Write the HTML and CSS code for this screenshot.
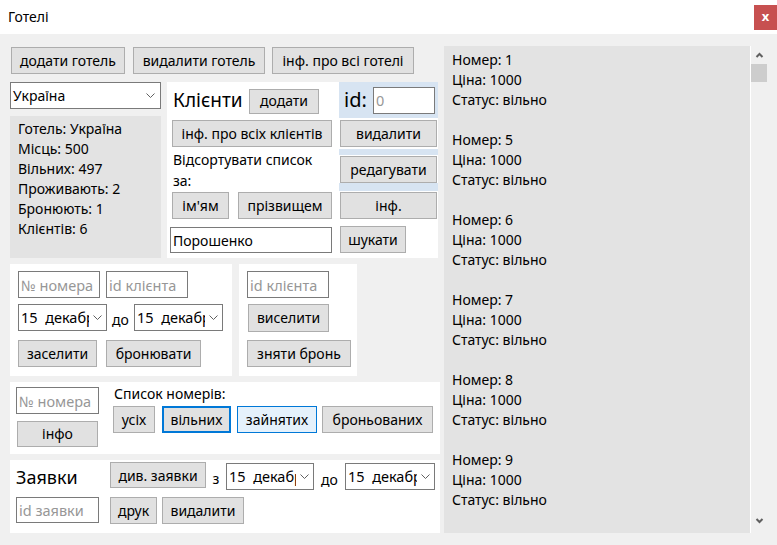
FILE: index.html
```html
<!DOCTYPE html>
<html lang="uk">
<head>
<meta charset="utf-8">
<title>Готелі</title>
<link rel="stylesheet" href="styles.css">
</head>
<body>
<div class="window">
  <header class="titlebar">
    <span class="title">Готелі</span>
    <span class="close">x</span>
  </header>
  <div class="main">
    <div class="left">
      <div class="toolbar">
        <button class="btn b-add-hotel">додати готель</button>
        <button class="btn b-del-hotel">видалити готель</button>
        <button class="btn b-info-hotels">інф. про всі готелі</button>
      </div>

      <div class="row2">
        <div class="hotelcol">
          <div class="combo combo-hotel"><span class="combo-text">Україна</span><span class="chev"><svg width="9" height="5" viewBox="0 0 9 5"><path d="M0.5 0.5 L4.5 4.5 L8.5 0.5" fill="none" stroke="#606060" stroke-width="1"/></svg></span></div>
          <div class="infobox">
            <div>Готель: Україна</div>
            <div>Місць: 500</div>
            <div>Вільних: 497</div>
            <div>Проживають: 2</div>
            <div>Бронюють: 1</div>
            <div>Клієнтів: 6</div>
          </div>
        </div>

        <div class="clients">
          <div class="clients-left">
            <div class="clients-head">
              <span class="heading">Клієнти</span>
              <button class="btn b-add-client">додати</button>
            </div>
            <button class="btn b-all-clients">інф. про всіх клієнтів</button>
            <div class="sortlabel">Відсортувати список<br>за:</div>
            <div class="sortbtns">
              <button class="btn b-name">ім'ям</button>
              <button class="btn b-surname">прізвищем</button>
            </div>
            <input class="field f-search" type="text" value="Порошенко">
          </div>
          <div class="clients-right">
            <div class="idbox">
              <span class="idlabel">id:</span>
              <input class="field f-id" type="text" placeholder="0">
            </div>
            <button class="btn b-col b-first">видалити</button>
            <div class="strip strip1"></div>
            <button class="btn b-col">редагувати</button>
            <div class="strip strip2"></div>
            <button class="btn b-col">інф.</button>
            <button class="btn b-find">шукати</button>
          </div>
        </div>
      </div>

      <div class="row3">
        <div class="panel settle">
          <div class="line">
            <input class="field f-small" type="text" placeholder="№ номера">
            <input class="field f-small" type="text" placeholder="id клієнта">
          </div>
          <div class="line line-dates">
            <div class="combo combo-date"><span class="combo-text">15&nbsp; декабря</span><span class="chev"><svg width="9" height="5" viewBox="0 0 9 5"><path d="M0.5 0.5 L4.5 4.5 L8.5 0.5" fill="none" stroke="#606060" stroke-width="1"/></svg></span></div>
            <span class="lbl-to">до</span>
            <div class="combo combo-date"><span class="combo-text">15&nbsp; декабря</span><span class="chev"><svg width="9" height="5" viewBox="0 0 9 5"><path d="M0.5 0.5 L4.5 4.5 L8.5 0.5" fill="none" stroke="#606060" stroke-width="1"/></svg></span></div>
          </div>
          <div class="line line-btns">
            <button class="btn b-settle">заселити</button>
            <button class="btn b-book">бронювати</button>
          </div>
        </div>
        <div class="panel evict">
          <input class="field f-small" type="text" placeholder="id клієнта">
          <button class="btn b-evict">виселити</button>
          <button class="btn b-unbook">зняти бронь</button>
        </div>
      </div>

      <div class="panel row4">
        <div class="room-col">
          <input class="field f-room" type="text" placeholder="№ номера">
          <button class="btn b-roominfo">інфо</button>
        </div>
        <div class="list-col">
          <div class="list-label">Список номерів:</div>
          <div class="list-btns">
            <button class="btn b-all">усіх</button>
            <button class="btn b-free focused">вільних</button>
            <button class="btn b-busy hovered">зайнятих</button>
            <button class="btn b-booked">броньованих</button>
          </div>
        </div>
      </div>

      <div class="panel row5">
        <span class="heading heading-req">Заявки</span>
        <div class="req-top">
          <button class="btn b-view">див. заявки</button>
          <span class="lbl-from">з</span>
          <div class="combo combo-req1"><span class="combo-text">15&nbsp; декабря</span><span class="chev"><svg width="9" height="5" viewBox="0 0 9 5"><path d="M0.5 0.5 L4.5 4.5 L8.5 0.5" fill="none" stroke="#606060" stroke-width="1"/></svg></span></div>
          <span class="lbl-to2">до</span>
          <div class="combo combo-req2"><span class="combo-text">15&nbsp; декабря</span><span class="chev"><svg width="9" height="5" viewBox="0 0 9 5"><path d="M0.5 0.5 L4.5 4.5 L8.5 0.5" fill="none" stroke="#606060" stroke-width="1"/></svg></span></div>
        </div>
        <input class="field f-req" type="text" placeholder="id заявки">
        <div class="req-bottom">
          <button class="btn b-print">друк</button>
          <button class="btn b-reqdel">видалити</button>
        </div>
      </div>
    </div>

    <div class="rooms">
      <div class="rooms-text">
        <div class="room"><div>Номер: 1</div><div>Ціна: 1000</div><div>Статус: вільно</div></div>
        <div class="room"><div>Номер: 5</div><div>Ціна: 1000</div><div>Статус: вільно</div></div>
        <div class="room"><div>Номер: 6</div><div>Ціна: 1000</div><div>Статус: вільно</div></div>
        <div class="room"><div>Номер: 7</div><div>Ціна: 1000</div><div>Статус: вільно</div></div>
        <div class="room"><div>Номер: 8</div><div>Ціна: 1000</div><div>Статус: вільно</div></div>
        <div class="room"><div>Номер: 9</div><div>Ціна: 1000</div><div>Статус: вільно</div></div>
      </div>
      <div class="scrollbar">
        <svg class="arrow" width="9" height="6" viewBox="0 0 9 6"><path d="M1.5 5 L4.5 2 L7.5 5" fill="none" stroke="#606060" stroke-width="2"/></svg>
        <div class="thumb"></div>
        <div class="spacer"></div>
        <svg class="arrow" width="9" height="6" viewBox="0 0 9 6"><path d="M1.5 1 L4.5 4 L7.5 1" fill="none" stroke="#606060" stroke-width="2"/></svg>
      </div>
    </div>
  </div>
</div>
</body>
</html>
```

FILE: styles.css
```css
* { box-sizing: border-box; }

html, body {
  margin: 0;
  padding: 0;
  background: #f0f0f0;
}

body {
  font-family: "Noto Sans", "Open Sans", sans-serif;
  font-size: 14px;
  color: #000;
  width: 777px;
  height: 545px;
  overflow: hidden;
}

.window {
  width: 777px;
  height: 545px;
  background: #f0f0f0;
}

.titlebar {
  height: 34px;
  background: #fff;
  display: flex;
  align-items: flex-start;
  justify-content: space-between;
}

.title {
  margin: 7px 0 0 8px;
  font-size: 14px;
  line-height: 20px;
}

.close {
  margin-top: 5px;
  width: 23px;
  height: 25px;
  background: #c75050;
  color: #fff;
  font-size: 13px;
  font-weight: bold;
  line-height: 23px;
  text-align: center;
}

.main {
  display: flex;
  padding-left: 10px;
}

.left {
  width: 430px;
  padding-top: 13px;
  display: flex;
  flex-direction: column;
}

/* generic controls */
.btn {
  font-family: inherit;
  font-size: 14px;
  color: #000;
  background: #e1e1e1;
  border: 1px solid #adadad;
  border-radius: 0;
  padding: 0;
  margin: 0;
  height: 27px;
  line-height: 24px;
  text-align: center;
  white-space: nowrap;
}

.field {
  font-family: inherit;
  font-size: 14.5px;
  color: #000;
  background: #fff;
  border: 1px solid #7a7a7a;
  border-radius: 0;
  padding: 0 2px;
  margin: 0;
  height: 27px;
  outline: none;
}

.field::placeholder {
  color: #979797;
  opacity: 1;
}

.combo {
  position: relative;
  background: #fff;
  border: 1px solid #7a7a7a;
  height: 27px;
  overflow: hidden;
  white-space: nowrap;
  line-height: 25px;
  padding-left: 2px;
  font-size: 14.5px;
}

.combo .chev {
  position: absolute;
  right: 0;
  top: 0;
  bottom: 0;
  width: 17px;
  background: #fff;
  display: flex;
  align-items: center;
  justify-content: center;
}

.combo-hotel { font-size: 14px; }
.combo-hotel .chev svg { margin-right: 2px; }

.panel {
  background: #fff;
}

.heading {
  font-size: 19px;
}

/* toolbar */
.toolbar {
  display: flex;
  padding-left: 1px;
}
.b-add-hotel { width: 114px; }
.b-del-hotel { width: 132px; margin-left: 8px; }
.b-info-hotels { width: 142px; margin-left: 7px; }

/* row 2 */
.row2 {
  display: flex;
  margin-top: 8px;
  height: 176px;
}

.hotelcol {
  width: 151px;
  display: flex;
  flex-direction: column;
}

.combo-hotel {
  height: 27px;
}

.infobox {
  margin-top: 7px;
  flex: 1;
  background: #e3e3e3;
  padding: 3px 0 0 8px;
  line-height: 20px;
}

.clients {
  margin-left: 6px;
  width: 271px;
  background: #fff;
  display: flex;
}

.clients-left {
  width: 172px;
  display: flex;
  flex-direction: column;
  align-items: flex-start;
}

.clients-head {
  display: flex;
  align-items: center;
  height: 36px;
  padding-left: 6px;
}
.clients-head .heading { width: 76px; line-height: 24px; margin-top: -1px; }
.b-add-client { width: 70px; height: 25px; line-height: 22px; margin-top: 2px; }

.b-all-clients { width: 160px; margin: 2px 0 0 5px; }

.sortlabel {
  margin: 2px 0 0 6px;
  line-height: 21px;
  height: 43px;
}

.sortbtns {
  display: flex;
  margin-left: 5px;
}
.b-name { width: 57px; }
.b-surname { width: 94px; margin-left: 9px; }

.f-search {
  width: 162px;
  height: 26px;
  margin: 8px 0 0 3px;
  font-size: 14px;
}

.clients-right {
  width: 99px;
  display: flex;
  flex-direction: column;
  align-items: flex-start;
}

.idbox {
  width: 99px;
  height: 36px;
  background: #d7e4f2;
  display: flex;
  align-items: center;
  padding-left: 5px;
}
.idlabel {
  font-size: 20px;
  width: 29px;
  line-height: 24px;
}
.f-id {
  width: 62px;
  height: 27px;
}

.b-col { width: 97px; margin-left: 1px; }
.b-first { margin-top: 2px; }
.strip { width: 99px; background: #d7e4f2; }
.strip1 { height: 6px; margin: 2px 0 1px; }
.strip2 { height: 8px; margin: 0 0 1px; }
.b-find { width: 66px; margin: 7px 0 0 1px; }

/* row 3 */
.row3 {
  display: flex;
  margin-top: 6px;
  height: 112px;
}

.settle {
  width: 222px;
  padding: 7px 8px;
}
.line { display: flex; align-items: center; }
.f-small { width: 82px; }
.settle .f-small + .f-small { margin-left: 6px; }
.line-dates { margin-top: 6px; }
.combo-date { width: 89px; }
.lbl-to { width: 27px; text-align: center; margin-top: 4px; }
.line-btns { margin-top: 9px; }
.b-settle { width: 79px; }
.b-book { width: 95px; margin-left: 9px; }

.evict {
  margin-left: 7px;
  width: 118px;
  padding: 7px 8px;
  display: flex;
  flex-direction: column;
  align-items: flex-start;
}
.b-evict { width: 81px; height: 28px; margin: 6px 0 0 1px; }
.b-unbook { width: 104px; margin-top: 8px; }

/* row 4 */
.row4 {
  margin-top: 6px;
  height: 72px;
  display: flex;
}
.room-col {
  width: 103px;
  padding: 5px 0 0 6px;
  display: flex;
  flex-direction: column;
  align-items: flex-start;
}
.f-room { width: 83px; }
.b-roominfo { width: 81px; height: 26px; margin: 7px 0 0 1px; }

.list-col {
  padding-top: 2px;
}
.list-label {
  line-height: 20px;
  margin-left: 1px;
}
.list-btns {
  display: flex;
  margin-top: 2px;
}
.b-all { width: 42px; }
.b-free { width: 69px; margin-left: 7px; }
.b-busy { width: 80px; margin-left: 6px; }
.b-booked { width: 111px; margin-left: 5px; }
.focused { border: 2px solid #0078d7; line-height: 22px; }
.hovered { background: #e5f1fb; border-color: #0078d7; }

/* row 5 */
.row5 {
  margin-top: 6px;
  height: 73px;
  display: grid;
  grid-template-columns: 94px auto;
  grid-template-rows: 27px 27px;
  row-gap: 8px;
  padding: 2px 0 0 6px;
  align-items: start;
}
.heading-req {
  font-size: 18px;
  line-height: 28px;
  margin-top: 1px;
}
.req-top {
  display: flex;
  align-items: flex-start;
}
.b-view { width: 96px; height: 26px; line-height: 23px; }
.lbl-from { width: 20px; text-align: center; line-height: 27px; margin-top: 3px; }
.combo-req1 { width: 88px; margin-top: 1px; }
.lbl-to2 { width: 31px; text-align: center; line-height: 27px; margin-top: 4px; }
.combo-req2 { width: 90px; margin-top: 1px; }
.f-req { width: 83px; height: 26px; }
.req-bottom { display: flex; }
.b-print { width: 47px; }
.b-reqdel { width: 82px; margin-left: 5px; }

/* rooms list */
.rooms {
  margin: 12px 0 0 4px;
  display: flex;
  height: 487px;
}
.rooms-text {
  width: 306px;
  background: #e3e3e3;
  padding: 4px 0 0 8px;
  line-height: 20px;
  overflow: hidden;
}
.room {
  margin-bottom: 20px;
}
.scrollbar {
  width: 17px;
  border-left: 1px solid #fff;
  display: flex;
  flex-direction: column;
  align-items: center;
  padding: 6px 0 9px;
}
.scrollbar .arrow { flex: none; }
.thumb {
  width: 16px;
  height: 18px;
  background: #cdcdcd;
  margin-top: 6px;
}
.spacer { flex: 1; }
```
